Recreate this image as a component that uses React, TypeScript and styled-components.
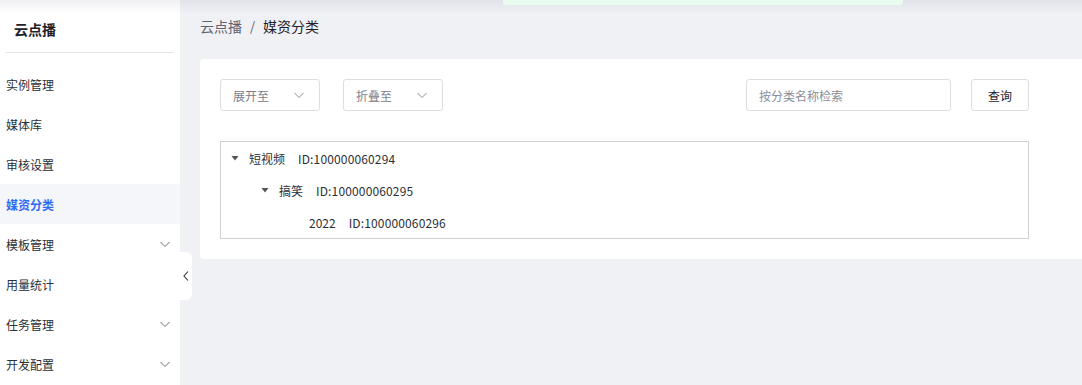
import React from 'react';
import styled, { createGlobalStyle } from 'styled-components';

const GlobalStyle = createGlobalStyle`
  html, body, #root {
    margin: 0;
    padding: 0;
    height: 100%;
  }
  body {
    font-family: "Noto Sans CJK SC", "Noto Sans", sans-serif;
    color: #1d2129;
    background: #f0f1f5;
    overflow: hidden;
  }
`;

interface IMenuItem {
  label: string;
  active?: boolean;
  children?: boolean;
}

interface ITreeNode {
  name: string;
  id: string;
  level: number;
  expanded?: boolean;
}

const menu: IMenuItem[] = [
  { label: '实例管理' },
  { label: '媒体库' },
  { label: '审核设置' },
  { label: '媒资分类', active: true },
  { label: '模板管理', children: true },
  { label: '用量统计' },
  { label: '任务管理', children: true },
  { label: '开发配置', children: true },
];

const tree: ITreeNode[] = [
  { name: '短视频', id: '100000060294', level: 0, expanded: true },
  { name: '搞笑', id: '100000060295', level: 1, expanded: true },
  { name: '2022', id: '100000060296', level: 2 },
];

const ChevronDown = ({ color = '#8a8f99' }: { color?: string }) => (
  <svg width='12' height='12' viewBox='0 0 12 12' fill='none'>
    <path d='M1.5 4l4.5 4.5L10.5 4' stroke={color} strokeWidth='1' />
  </svg>
);

const App = () => {
  return (
    <>
      <GlobalStyle />
      <Layout>
        <TopShade />
        <Toast />
        <Sidebar>
          <SideTitle>云点播</SideTitle>
          <Divider />
          <Menu>
            {menu.map(item => (
              <MenuItem key={item.label} $active={item.active}>
                <span>{item.label}</span>
                {item.children && <ChevronDown color='#6b7079' />}
              </MenuItem>
            ))}
          </Menu>
        </Sidebar>
        <CollapseHandle>
          <svg width='8' height='12' viewBox='0 0 8 12' fill='none'>
            <path d='M6 1.5L2 6l4 4.5' stroke='#333' strokeWidth='1.1' />
          </svg>
        </CollapseHandle>
        <Main>
          <Breadcrumb>
            <Crumb>云点播</Crumb>
            <Sep>/</Sep>
            <Crumb $current>媒资分类</Crumb>
          </Breadcrumb>
          <Card>
            <Toolbar>
              <Select>
                <span>展开至</span>
                <ChevronDown />
              </Select>
              <Select>
                <span>折叠至</span>
                <ChevronDown />
              </Select>
              <Spacer />
              <SearchInput placeholder='按分类名称检索' />
              <Button>查询</Button>
            </Toolbar>
            <TreeBox>
              {tree.map(node => (
                <TreeRow key={node.id} $level={node.level}>
                  <Caret $visible={node.expanded}>
                    <svg width='8' height='8' viewBox='0 0 8 8'>
                      <path d='M0.5 2h7L4 6.5z' fill='#555' />
                    </svg>
                  </Caret>
                  <NodeName>{node.name}</NodeName>
                  <NodeId>ID:{node.id}</NodeId>
                </TreeRow>
              ))}
            </TreeBox>
          </Card>
        </Main>
      </Layout>
    </>
  );
};

const Layout = styled.div`
  position: relative;
  display: flex;
  height: 385px;
  width: 1082px;
  overflow: hidden;
`;

const TopShade = styled.div`
  position: absolute;
  top: 0;
  left: 0;
  right: 0;
  height: 14px;
  background: linear-gradient(rgba(30, 40, 70, 0.07), rgba(30, 40, 70, 0));
  pointer-events: none;
  z-index: 3;
`;

const Toast = styled.div`
  position: absolute;
  top: 0;
  left: 503px;
  width: 400px;
  height: 5px;
  background: #eafcee;
  border-radius: 0 0 3px 3px;
  z-index: 4;
`;

const Sidebar = styled.aside`
  width: 180px;
  flex-shrink: 0;
  background: #fff;
  display: flex;
  flex-direction: column;
`;

const SideTitle = styled.div`
  height: 52px;
  box-sizing: border-box;
  padding: 18px 0 0 14px;
  font-size: 14px;
  font-weight: 700;
  line-height: 22px;
  color: #1d2129;
`;

const Divider = styled.div`
  height: 1px;
  margin: 0 6px;
  background: #e5e6eb;
`;

const Menu = styled.nav`
  padding-top: 11px;
  display: flex;
  flex-direction: column;
`;

const MenuItem = styled.div<{ $active?: boolean }>`
  height: 40px;
  display: flex;
  align-items: center;
  justify-content: space-between;
  padding: 0 9px 0 6px;
  font-size: 12px;
  color: ${p => (p.$active ? '#2d6df6' : '#2b2f36')};
  font-weight: ${p => (p.$active ? 700 : 400)};
  background: ${p => (p.$active ? '#f5f6f9' : 'transparent')};
`;

const CollapseHandle = styled.div`
  position: absolute;
  left: 180px;
  top: 252px;
  width: 12px;
  height: 48px;
  background: #fff;
  border-radius: 0 6px 6px 0;
  display: flex;
  align-items: center;
  justify-content: center;
  z-index: 2;
`;

const Main = styled.main`
  flex: 1;
  padding: 15px 0 0 20px;
  display: flex;
  flex-direction: column;
`;

const Breadcrumb = styled.div`
  display: flex;
  align-items: center;
  height: 22px;
  font-size: 14px;
  line-height: 22px;
`;

const Crumb = styled.span<{ $current?: boolean }>`
  color: ${p => (p.$current ? '#1d2129' : '#5c6270')};
`;

const Sep = styled.span`
  margin: 0 8px;
  color: #5c6270;
  font-size: 13px;
`;

const Card = styled.section`
  margin-top: 22px;
  background: #fff;
  border-radius: 4px 0 0 4px;
  padding: 20px 53px 20px 20px;
  height: 200px;
  box-sizing: border-box;
`;

const Toolbar = styled.div`
  display: flex;
  align-items: center;
  height: 32px;
`;

const Select = styled.div`
  width: 100px;
  height: 32px;
  box-sizing: border-box;
  border: 1px solid #dcdee2;
  border-radius: 3px;
  display: flex;
  align-items: center;
  justify-content: space-between;
  padding: 0 14px 0 12px;
  font-size: 12px;
  color: #7b808a;
  margin-right: 23px;
`;

const Spacer = styled.div`
  flex: 1;
`;

const SearchInput = styled.input`
  width: 205px;
  height: 32px;
  box-sizing: border-box;
  border: 1px solid #dcdee2;
  border-radius: 3px;
  padding: 0 12px;
  font-family: inherit;
  font-size: 12px;
  outline: none;
  &::placeholder {
    color: #8a8f99;
  }
`;

const Button = styled.button`
  margin-left: 20px;
  width: 58px;
  height: 32px;
  box-sizing: border-box;
  border: 1px solid #dcdee2;
  border-radius: 3px;
  background: #fff;
  font-family: inherit;
  font-size: 12px;
  color: #1d2129;
`;

const TreeBox = styled.div`
  margin-top: 30px;
  border: 1px solid #cfd1d5;
  padding: 0;
  height: 98px;
  box-sizing: border-box;
`;

const TreeRow = styled.div<{ $level: number }>`
  height: 32px;
  display: flex;
  align-items: center;
  padding-left: ${p => 10 + p.$level * 30}px;
  font-size: 12px;
  color: #2b2f36;
`;

const Caret = styled.span<{ $visible?: boolean }>`
  width: 18px;
  display: inline-flex;
  visibility: ${p => (p.$visible ? 'visible' : 'hidden')};
`;

const NodeName = styled.span``;

const NodeId = styled.span`
  margin-left: 13px;
  letter-spacing: 0.15px;
`;

export default App;
